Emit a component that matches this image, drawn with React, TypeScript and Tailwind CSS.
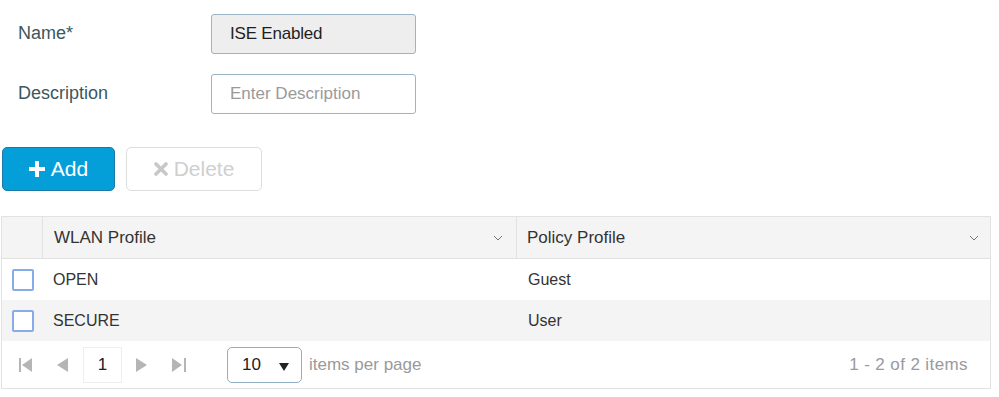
import React from "react";

const font = { fontFamily: '"Liberation Sans", Arial, sans-serif' };

function Chevron() {
  return (
    <svg width="10" height="6" viewBox="0 0 10 6" className="shrink-0">
      <path d="M1 1 L5 5 L9 1" fill="none" stroke="#777" strokeWidth="1" />
    </svg>
  );
}

function Checkbox() {
  return <div className="w-[22px] h-[22px] border-2 border-[#86adea] rounded-[2px] bg-white" />;
}

export default function App() {
  return (
    <div className="w-[999px] h-[397px] bg-white relative" style={font}>
      <div className="pt-[14px] pl-[18px] flex flex-col gap-[20px]">
        <div className="flex items-center">
          <div className="w-[193px] text-[18px] text-[#3c5660] -mt-[2px]">Name*</div>
          <div className="w-[205px] h-[40px] rounded-[3px] border border-[#9ab5c4] bg-[#eeeeee] flex items-center pl-[18px] text-[17px] text-[#1f1f1f] tracking-[-0.2px]">
            ISE Enabled
          </div>
        </div>
        <div className="flex items-center">
          <div className="w-[193px] text-[18px] text-[#3c5660] -mt-[2px]">Description</div>
          <div className="w-[205px] h-[40px] rounded-[3px] border border-[#9ab5c4] bg-white flex items-center pl-[18px] text-[17px] text-[#9a9a9a]">
            Enter Description
          </div>
        </div>
      </div>

      <div className="flex gap-[11px] pl-[2px] mt-[33px]">
        <div className="w-[113px] h-[44px] rounded-[5px] bg-[#049fd9] border border-[#1b79a8] flex items-center justify-center gap-[6px] text-white text-[21px]">
          <svg width="16" height="16" viewBox="0 0 16 16">
            <path d="M6 0h4v6h6v4h-6v6h-4v-6h-6v-4h6z" fill="white" />
          </svg>
          <span>Add</span>
        </div>
        <div className="w-[136px] h-[44px] rounded-[5px] bg-white border border-[#dddddd] flex items-center justify-center gap-[6px] text-[#cfcfcf] text-[21px]">
          <svg width="14" height="14" viewBox="0 0 14 14">
            <path d="M2 2 L12 12 M12 2 L2 12" stroke="#c8c8c8" strokeWidth="3.6" strokeLinecap="round" />
          </svg>
          <span>Delete</span>
        </div>
      </div>

      <div className="ml-[1px] mt-[25px] w-[990px] border border-[#e2e2e2]">
        <div className="flex h-[42px] bg-[#f4f4f4] border-b border-[#e2e2e2]">
          <div className="w-[41px] border-r border-[#e2e2e2]" />
          <div className="w-[474px] flex items-center justify-between pl-[11px] pr-[13px] border-r border-[#e2e2e2] text-[17px] text-[#333]">
            <span>WLAN Profile</span>
            <Chevron />
          </div>
          <div className="flex-1 flex items-center justify-between pl-[10px] pr-[11px] text-[17px] text-[#333]">
            <span>Policy Profile</span>
            <Chevron />
          </div>
        </div>
        <div className="flex h-[41px] bg-white items-center">
          <div className="w-[41px] flex items-center justify-center pl-[1px]"><Checkbox /></div>
          <div className="w-[474px] pl-[10px] text-[16px] text-[#333]">OPEN</div>
          <div className="flex-1 pl-[11px] text-[16px] text-[#333]">Guest</div>
        </div>
        <div className="flex h-[41px] bg-[#f4f4f4] items-center">
          <div className="w-[41px] flex items-center justify-center pl-[1px]"><Checkbox /></div>
          <div className="w-[474px] pl-[10px] text-[16px] text-[#333]">SECURE</div>
          <div className="flex-1 pl-[11px] text-[16px] text-[#333]">User</div>
        </div>
        <div className="flex h-[47px] items-center bg-white">
          <div className="flex items-center pl-[17px]">
            <svg width="14" height="14" viewBox="0 0 14 14">
              <rect x="0" y="0" width="2" height="14" fill="#b5b5b5" />
              <path d="M13 0 L3 7 L13 14 Z" fill="#b5b5b5" />
            </svg>
            <svg width="11" height="14" viewBox="0 0 11 14" className="ml-[24px]">
              <path d="M11 0 L0 7 L11 14 Z" fill="#b5b5b5" />
            </svg>
            <div className="ml-[15px] w-[39px] h-[36px] border border-[#eeeeee] bg-white flex items-center justify-center text-[17px] text-[#222]">
              1
            </div>
            <svg width="11" height="14" viewBox="0 0 11 14" className="ml-[14px]">
              <path d="M0 0 L11 7 L0 14 Z" fill="#b5b5b5" />
            </svg>
            <svg width="14" height="14" viewBox="0 0 14 14" className="ml-[25px]">
              <path d="M0 0 L10 7 L0 14 Z" fill="#b5b5b5" />
              <rect x="12" y="0" width="2" height="14" fill="#b5b5b5" />
            </svg>
            <div className="ml-[41px] w-[75px] h-[36px] rounded-[5px] border border-[#8fb0c2] flex items-center justify-between pl-[14px] pr-[12px] text-[17px] text-[#222]">
              <span>10</span>
              <svg width="10" height="8" viewBox="0 0 10 8" className="mt-[4px]">
                <path d="M0 0 L10 0 L5 8 Z" fill="#222" />
              </svg>
            </div>
            <span className="ml-[7px] text-[17px] text-[#9a9a9a]">items per page</span>
          </div>
          <span className="ml-auto pr-[22px] text-[17px] text-[#9a9a9a] tracking-[0.4px]">1 - 2 of 2 items</span>
        </div>
      </div>
    </div>
  );
}
